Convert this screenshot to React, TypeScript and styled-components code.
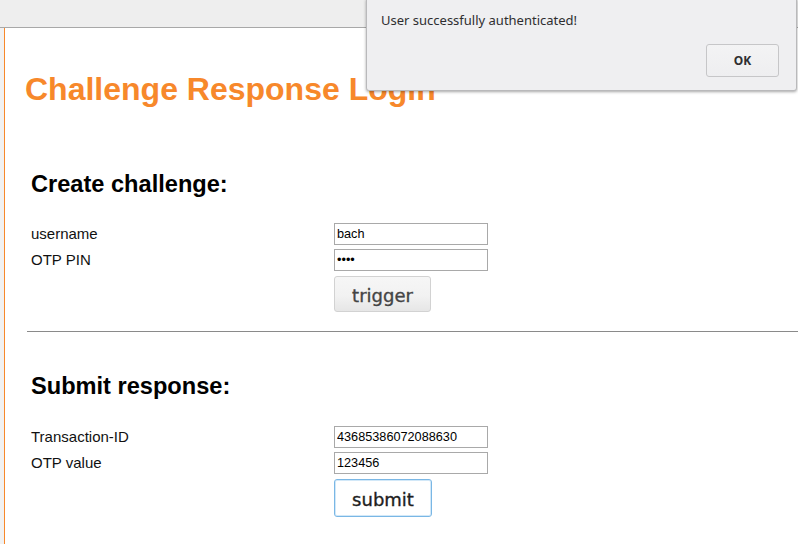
import React from "react";
import styled, { createGlobalStyle, css } from "styled-components";

// ====== Global ======
const GlobalStyle = createGlobalStyle`
  html, body {
    margin: 0;
    padding: 0;
    background: #ffffff;
  }
  body {
    font-family: "Liberation Sans", Arial, sans-serif;
    overflow: hidden;
  }
`;

// ====== Layout ======
const Screen = styled.div`
  position: relative;
  width: 798px;
  height: 544px;
  overflow: hidden;
  display: flex;
  flex-direction: column;
`;

const TopBar = styled.div`
  height: 27px;
  flex-shrink: 0;
  background: #eeeeee;
  border-bottom: 1px solid #a8a8a8;
`;

const Body = styled.div`
  flex: 1;
  display: flex;
`;

const Gutter = styled.div`
  width: 4px;
  background: #f1f1f1;
  border-right: 1px solid #f7882b;
`;

const Content = styled.main`
  flex: 1;
  padding-left: 20px;
`;

const Title = styled.h1`
  margin: 43px 0 0;
  font-size: 32px;
  line-height: 37px;
  font-weight: bold;
  color: #f7882b;
`;

const Section = styled.section<{ gap: number }>`
  margin-top: ${({ gap }) => gap}px;
  padding-left: 6px;
`;

const Heading = styled.h2`
  margin: 0;
  font-size: 23.6px;
  line-height: 28px;
  font-weight: bold;
  color: #000000;
`;

const Form = styled.div<{ top: number }>`
  margin-top: ${({ top }) => top}px;
  display: grid;
  grid-template-columns: 303px 154px;
  row-gap: 4px;
  align-items: center;
`;

const Label = styled.label`
  font-size: 15px;
  line-height: 20px;
  margin-top: -1px;
  color: #111111;
`;

const Field = styled.input`
  box-sizing: border-box;
  display: block;
  width: 154px;
  height: 22px;
  margin: 0;
  padding: 0 2px;
  border: 1px solid #a9a9a9;
  background: #ffffff;
  font-family: "Liberation Sans", Arial, sans-serif;
  font-size: 12.7px;
  color: #000000;
  outline: none;
`;

const ButtonCell = styled.div`
  grid-column: 2;
  align-self: start;
  padding-top: 1px;
`;

const Button = styled.button<{ focused?: boolean }>`
  box-sizing: border-box;
  display: block;
  width: 97px;
  height: 36px;
  margin: 0;
  border-radius: 3px;
  font-family: "DejaVu Sans", Verdana, sans-serif;
  font-size: 18px;
  line-height: 1;
  padding: 3px 0 0;
  -webkit-text-stroke: 0.35px currentColor;
  cursor: pointer;

  ${({ focused }) =>
    focused
      ? css`
          height: 38px;
          width: 98px;
          background: #ffffff;
          color: #1e1e1e;
          border: 1px solid #7ab7e5;
          box-shadow: inset 0 0 0 1px #d2e8f8;
        `
      : css`
          background: linear-gradient(#f6f6f6, #f2f2f2 55%, #e6e6e6);
          color: #444444;
          border: 1px solid #d2d2d2;
        `}
`;

const Rule = styled.hr`
  margin: 19px 0 0 2px;
  border: 0;
  height: 1px;
  background: #8a8a8a;
`;

// ====== Alert dialog ======
const Dialog = styled.div`
  position: absolute;
  top: -1px;
  left: 366px;
  width: 431px;
  height: 92px;
  box-sizing: border-box;
  background: #efeff1;
  border: 1px solid #b9b9bb;
  border-radius: 0 0 3px 3px;
  box-shadow: 0 1px 3px rgba(0, 0, 0, 0.35);
  font-family: "Noto Sans", "Open Sans", sans-serif;
  display: flex;
  flex-direction: column;
  padding: 11px 17px 0 14px;
`;

const Message = styled.div`
  font-size: 13px;
  line-height: 18px;
  color: #2e2e30;
`;

const DialogActions = styled.div`
  display: flex;
  justify-content: flex-end;
  margin-top: 15px;
`;

const OkButton = styled.button`
  box-sizing: border-box;
  width: 73px;
  height: 33px;
  border: 1px solid #c6c6c8;
  border-radius: 3px;
  background: linear-gradient(#f3f3f4, #eeeef0);
  font-family: "Noto Sans", "Open Sans", sans-serif;
  font-weight: bold;
  font-size: 12px;
  color: #2e2e30;
  padding: 0;
`;

type Row = { label: string; value: string; type?: string };

const FormBlock: React.FC<{
  title: string;
  rows: Row[];
  action: string;
  focused?: boolean;
  gap: number;
  formTop: number;
}> = ({ title, rows, action, focused, gap, formTop }) => (
  <Section gap={gap}>
    <Heading>{title}</Heading>
    <Form top={formTop}>
      {rows.map((r) => (
        <React.Fragment key={r.label}>
          <Label>{r.label}</Label>
          <Field type={r.type || "text"} defaultValue={r.value} readOnly />
        </React.Fragment>
      ))}
      <ButtonCell>
        <Button focused={focused}>{action}</Button>
      </ButtonCell>
    </Form>
  </Section>
);

const App: React.FC = () => {
  return (
    <Screen>
      <GlobalStyle />
      <TopBar />
      <Body>
        <Gutter />
        <Content>
          <Title>Challenge Response Login</Title>
          <FormBlock
            title="Create challenge:"
            gap={62}
            formTop={25}
            rows={[
              { label: "username", value: "bach" },
              { label: "OTP PIN", value: "1234", type: "password" },
            ]}
            action="trigger"
          />
          <Rule />
          <FormBlock
            title="Submit response:"
            gap={40}
            formTop={26}
            rows={[
              { label: "Transaction-ID", value: "43685386072088630" },
              { label: "OTP value", value: "123456" },
            ]}
            action="submit"
            focused
          />
        </Content>
      </Body>
      <Dialog>
        <Message>User successfully authenticated!</Message>
        <DialogActions>
          <OkButton>OK</OkButton>
        </DialogActions>
      </Dialog>
    </Screen>
  );
};

export default App;
